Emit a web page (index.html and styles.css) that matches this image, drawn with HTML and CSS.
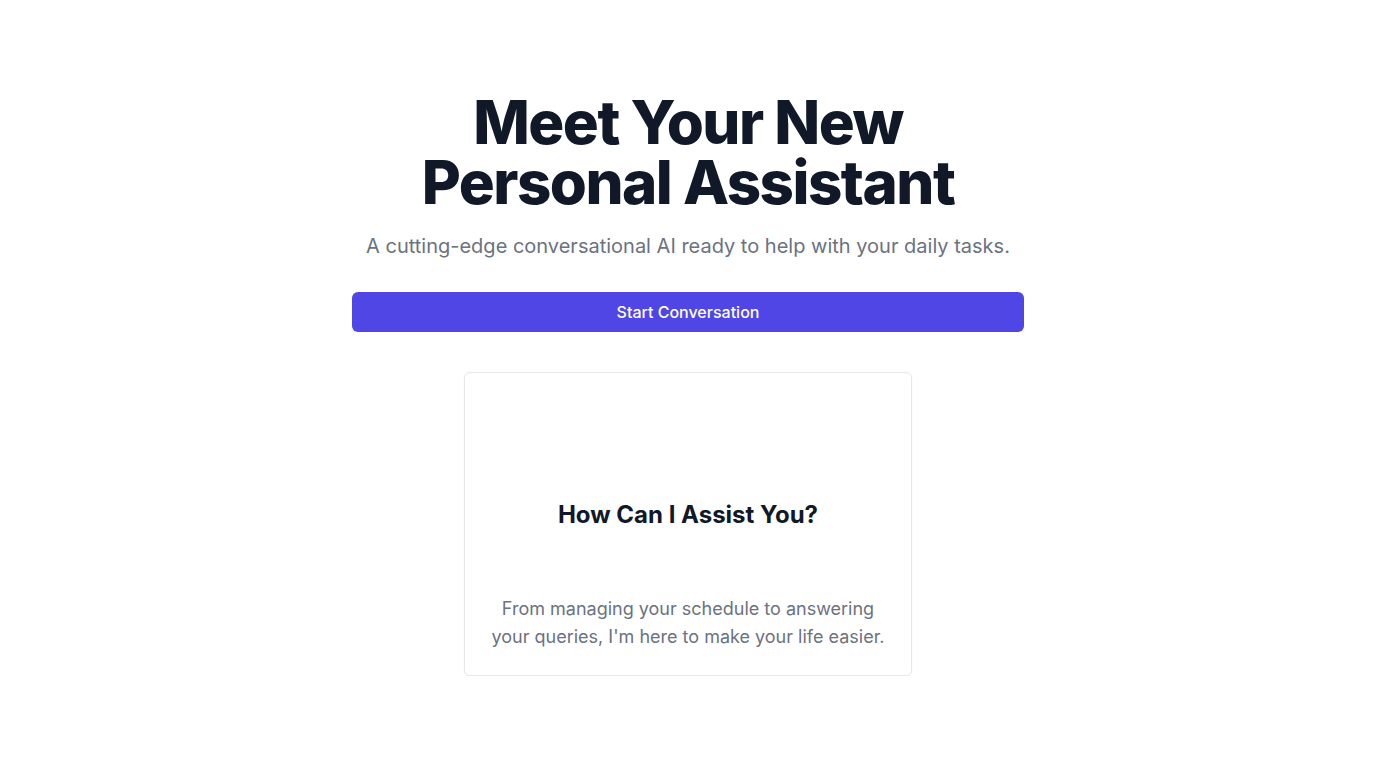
FILE: index.html
```html
<!DOCTYPE html>
<html lang="en">
<head>
<meta charset="utf-8">
<title>Personal Assistant</title>
<link rel="stylesheet" href="styles.css">
</head>
<body>
<main class="hero">
  <h1 class="hero-title">Meet Your New<br>Personal Assistant</h1>
  <p class="hero-sub">A cutting-edge conversational AI ready to help with your daily tasks.</p>
  <button class="cta" type="button">Start Conversation</button>
  <section class="card">
    <div class="card-media"></div>
    <h2 class="card-title">How Can I Assist You?</h2>
    <p class="card-text">From managing your schedule to answering your queries, I'm here to make your life easier.</p>
  </section>
</main>
</body>
</html>
```

FILE: styles.css
```css
* { box-sizing: border-box; }
html, body { margin: 0; padding: 0; background: #ffffff; }
body {
  font-family: Inter, "Noto Sans", "Liberation Sans", sans-serif;
  color: #111827;
}
.hero {
  display: flex;
  flex-direction: column;
  align-items: center;
  padding-top: 92px;
  text-align: center;
}
.hero-title {
  margin: 0;
  font-size: 60px;
  line-height: 60px;
  font-weight: 800;
  letter-spacing: -1.5px;
  color: #111827;
}
.hero-sub {
  margin: 20px 0 0;
  font-size: 20px;
  line-height: 28px;
  color: #6b7280;
}
.cta {
  margin-top: 32px;
  width: 672px;
  height: 40px;
  border: 0;
  border-radius: 6px;
  background: #4f46e5;
  color: #ffffff;
  font-family: inherit;
  font-size: 16px;
  font-weight: 500;
  line-height: 24px;
  cursor: pointer;
}
.card {
  margin-top: 40px;
  width: 448px;
  padding: 24px;
  border: 1px solid #e5e7eb;
  border-radius: 6px;
  background: #ffffff;
  box-shadow: 0 1px 2px rgba(0, 0, 0, 0.05);
}
.card-media {
  height: 102px;
}
.card-title {
  margin: 0;
  font-size: 24px;
  line-height: 32px;
  font-weight: 700;
  color: #111827;
}
.card-text {
  margin: 64px 0 0;
  font-size: 18px;
  line-height: 28px;
  color: #6b7280;
}
```
